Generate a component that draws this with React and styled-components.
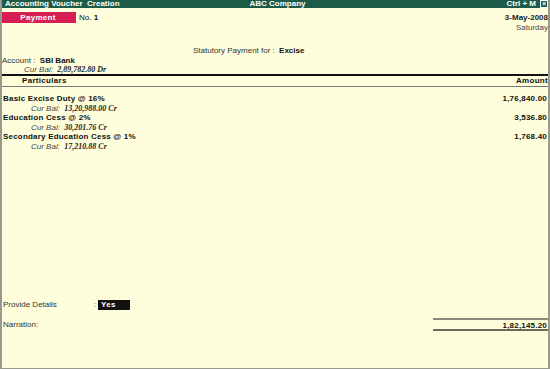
import React from "react";
import styled, { createGlobalStyle } from "styled-components";

const Global = createGlobalStyle`
  html, body { margin: 0; padding: 0; background: #fefedc; }
  body { font-family: "Liberation Sans", Arial, sans-serif; color: #111; }
`;

const entries = [
  { name: "Basic Excise Duty @ 16%", bal: "13,20,988.00 Cr", amount: "1,76,840.00" },
  { name: "Education Cess @ 2%", bal: "30,201.76 Cr", amount: "3,536.80" },
  { name: "Secondary Education Cess @ 1%", bal: "17,210.88 Cr", amount: "1,768.40" },
];

const App = () => {
  return (
    <>
      <Global />
      <Screen>
        {/* title bar */}
        <TitleBar>
          <span>Accounting Voucher&nbsp; Creation</span>
          <TitleCenter>ABC Company</TitleCenter>
          <TitleRight>
            Ctrl + M
            <CloseBox>×</CloseBox>
          </TitleRight>
        </TitleBar>

        <Body>
          <TopRow>
            <VoucherType>
              <Badge>Payment</Badge>
              <VoucherNo>
                No. <b>1</b>
              </VoucherNo>
            </VoucherType>
            <DateBlock>
              <b>3-May-2008</b>
              <span>Saturday</span>
            </DateBlock>
          </TopRow>

          <Statutory>
            Statutory Payment for : <b>Excise</b>
          </Statutory>

          <AccountLine>
            Account :&nbsp; <b>SBI Bank</b>
          </AccountLine>
          <CurBal $indent={22}>
            Cur Bal:&nbsp; <b>2,89,782.80 Dr</b>
          </CurBal>

          <TableHead>
            <span>Particulars</span>
            <span>Amount</span>
          </TableHead>

          <Entries>
            {entries.map((e) => (
              <Entry key={e.name}>
                <EntryRow>
                  <EntryName>{e.name}</EntryName>
                  <EntryAmount>{e.amount}</EntryAmount>
                </EntryRow>
                <CurBal $indent={29}>
                  Cur Bal:&nbsp; <b>{e.bal}</b>
                </CurBal>
              </Entry>
            ))}
          </Entries>

          <Footer>
            <DetailsRow>
              <Label>Provide Details</Label>
              <Colon>:</Colon>
              <YesBox>Yes</YesBox>
            </DetailsRow>
            <NarrationRow>
              <Label>Narration:</Label>
              <Total>1,82,145.20</Total>
            </NarrationRow>
          </Footer>
        </Body>
      </Screen>
    </>
  );
};

export default App;

const Screen = styled.div`
  width: 550px;
  height: 369px;
  box-sizing: border-box;
  display: flex;
  flex-direction: column;
  background: #fefedc;
  border-left: 2px solid #9a9a8c;
  border-right: 2px solid #9a9a8c;
  border-bottom: 1px solid #9a9a8c;
  font-size: 8px;
  overflow: hidden;
`;

const TitleBar = styled.div`
  height: 8px;
  margin: 0 -2px;
  padding: 0 2px 0 5px;
  display: grid;
  grid-template-columns: 1fr auto 1fr;
  align-items: center;
  background: #1c5b47;
  color: #fff;
  font-weight: 700;
  font-size: 8px;
  line-height: 8px;
`;

const TitleCenter = styled.span`
  text-align: center;
  padding-left: 2px;
`;

const TitleRight = styled.span`
  display: flex;
  justify-content: flex-end;
  align-items: center;
  gap: 4px;
`;

const CloseBox = styled.span`
  width: 6px;
  height: 6px;
  border: 1px solid #fff;
  display: flex;
  align-items: center;
  justify-content: center;
  font-size: 7px;
  line-height: 6px;
`;

const Body = styled.div`
  flex: 1;
  display: flex;
  flex-direction: column;
`;

const TopRow = styled.div`
  display: flex;
  justify-content: space-between;
  align-items: flex-start;
  margin-top: 4px;
`;

const VoucherType = styled.div`
  display: flex;
  align-items: center;
  margin-left: -2px;
`;

const Badge = styled.div`
  width: 76px;
  height: 11px;
  background: #d81f55;
  color: #fff;
  font-weight: 700;
  font-size: 8px;
  line-height: 11px;
  text-align: center;
  letter-spacing: 0.3px;
`;

const VoucherNo = styled.span`
  margin-left: 3px;
  font-size: 8px;
`;

const DateBlock = styled.div`
  display: flex;
  flex-direction: column;
  align-items: flex-end;
  margin-top: 1px;
  line-height: 10px;
  color: #222;
  span {
    color: #444;
  }
`;

const Statutory = styled.div`
  margin-top: 13px;
  margin-left: 191px;
  line-height: 10px;
  color: #333;
  b {
    color: #111;
    margin-left: 2px;
  }
`;

const AccountLine = styled.div`
  line-height: 9px;
  color: #333;
  b {
    color: #111;
  }
`;

const CurBal = styled.div`
  padding-left: ${(p) => p.$indent}px;
  line-height: 9px;
  font-style: italic;
  color: #444;
  font-size: 8px;
  b {
    color: #222;
    font-family: "Liberation Serif", "Times New Roman", serif;
    font-size: 8px;
  }
`;

const TableHead = styled.div`
  margin-top: 0;
  margin-right: -1px;
  display: flex;
  justify-content: space-between;
  border-top: 2px solid #111;
  border-bottom: 1px solid #777;
  height: 10px;
  line-height: 10px;
  font-weight: 700;
  padding-left: 20px;
  padding-right: 1px;
  letter-spacing: 0.3px;
`;

const Entries = styled.div`
  margin-top: 7px;
  display: flex;
  flex-direction: column;
`;

const Entry = styled.div`
  display: flex;
  flex-direction: column;
`;

const EntryRow = styled.div`
  display: flex;
  justify-content: space-between;
  align-items: flex-end;
  line-height: 10px;
  font-weight: 700;
  padding-left: 1px;
`;

const EntryName = styled.span`
  letter-spacing: 0.2px;
`;

const EntryAmount = styled.span`
  padding-right: 1px;
  letter-spacing: 0.2px;
`;

const Footer = styled.div`
  margin-top: auto;
  margin-bottom: 37px;
  display: flex;
  flex-direction: column;
`;

const DetailsRow = styled.div`
  display: flex;
  align-items: center;
  height: 11px;
  padding-left: 1px;
`;

const Label = styled.span`
  color: #333;
  line-height: 10px;
`;

const Colon = styled.span`
  margin-left: 37px;
  color: #555;
`;

const YesBox = styled.span`
  margin-left: 2px;
  width: 32px;
  height: 10px;
  line-height: 10px;
  background: #111;
  color: #fff;
  font-weight: 700;
  padding-left: 3px;
  box-sizing: border-box;
  letter-spacing: 0.3px;
`;

const NarrationRow = styled.div`
  margin-top: 8px;
  display: flex;
  justify-content: space-between;
  align-items: center;
  padding-left: 1px;
`;

const Total = styled.span`
  width: 116px;
  box-sizing: border-box;
  margin-right: -1px;
  border-top: 2px solid #8a8a7a;
  border-bottom: 2px solid #6c6c5c;
  height: 13px;
  line-height: 9px;
  padding-top: 1px;
  text-align: right;
  padding-right: 2px;
  font-weight: 700;
  letter-spacing: 0.2px;
`;
